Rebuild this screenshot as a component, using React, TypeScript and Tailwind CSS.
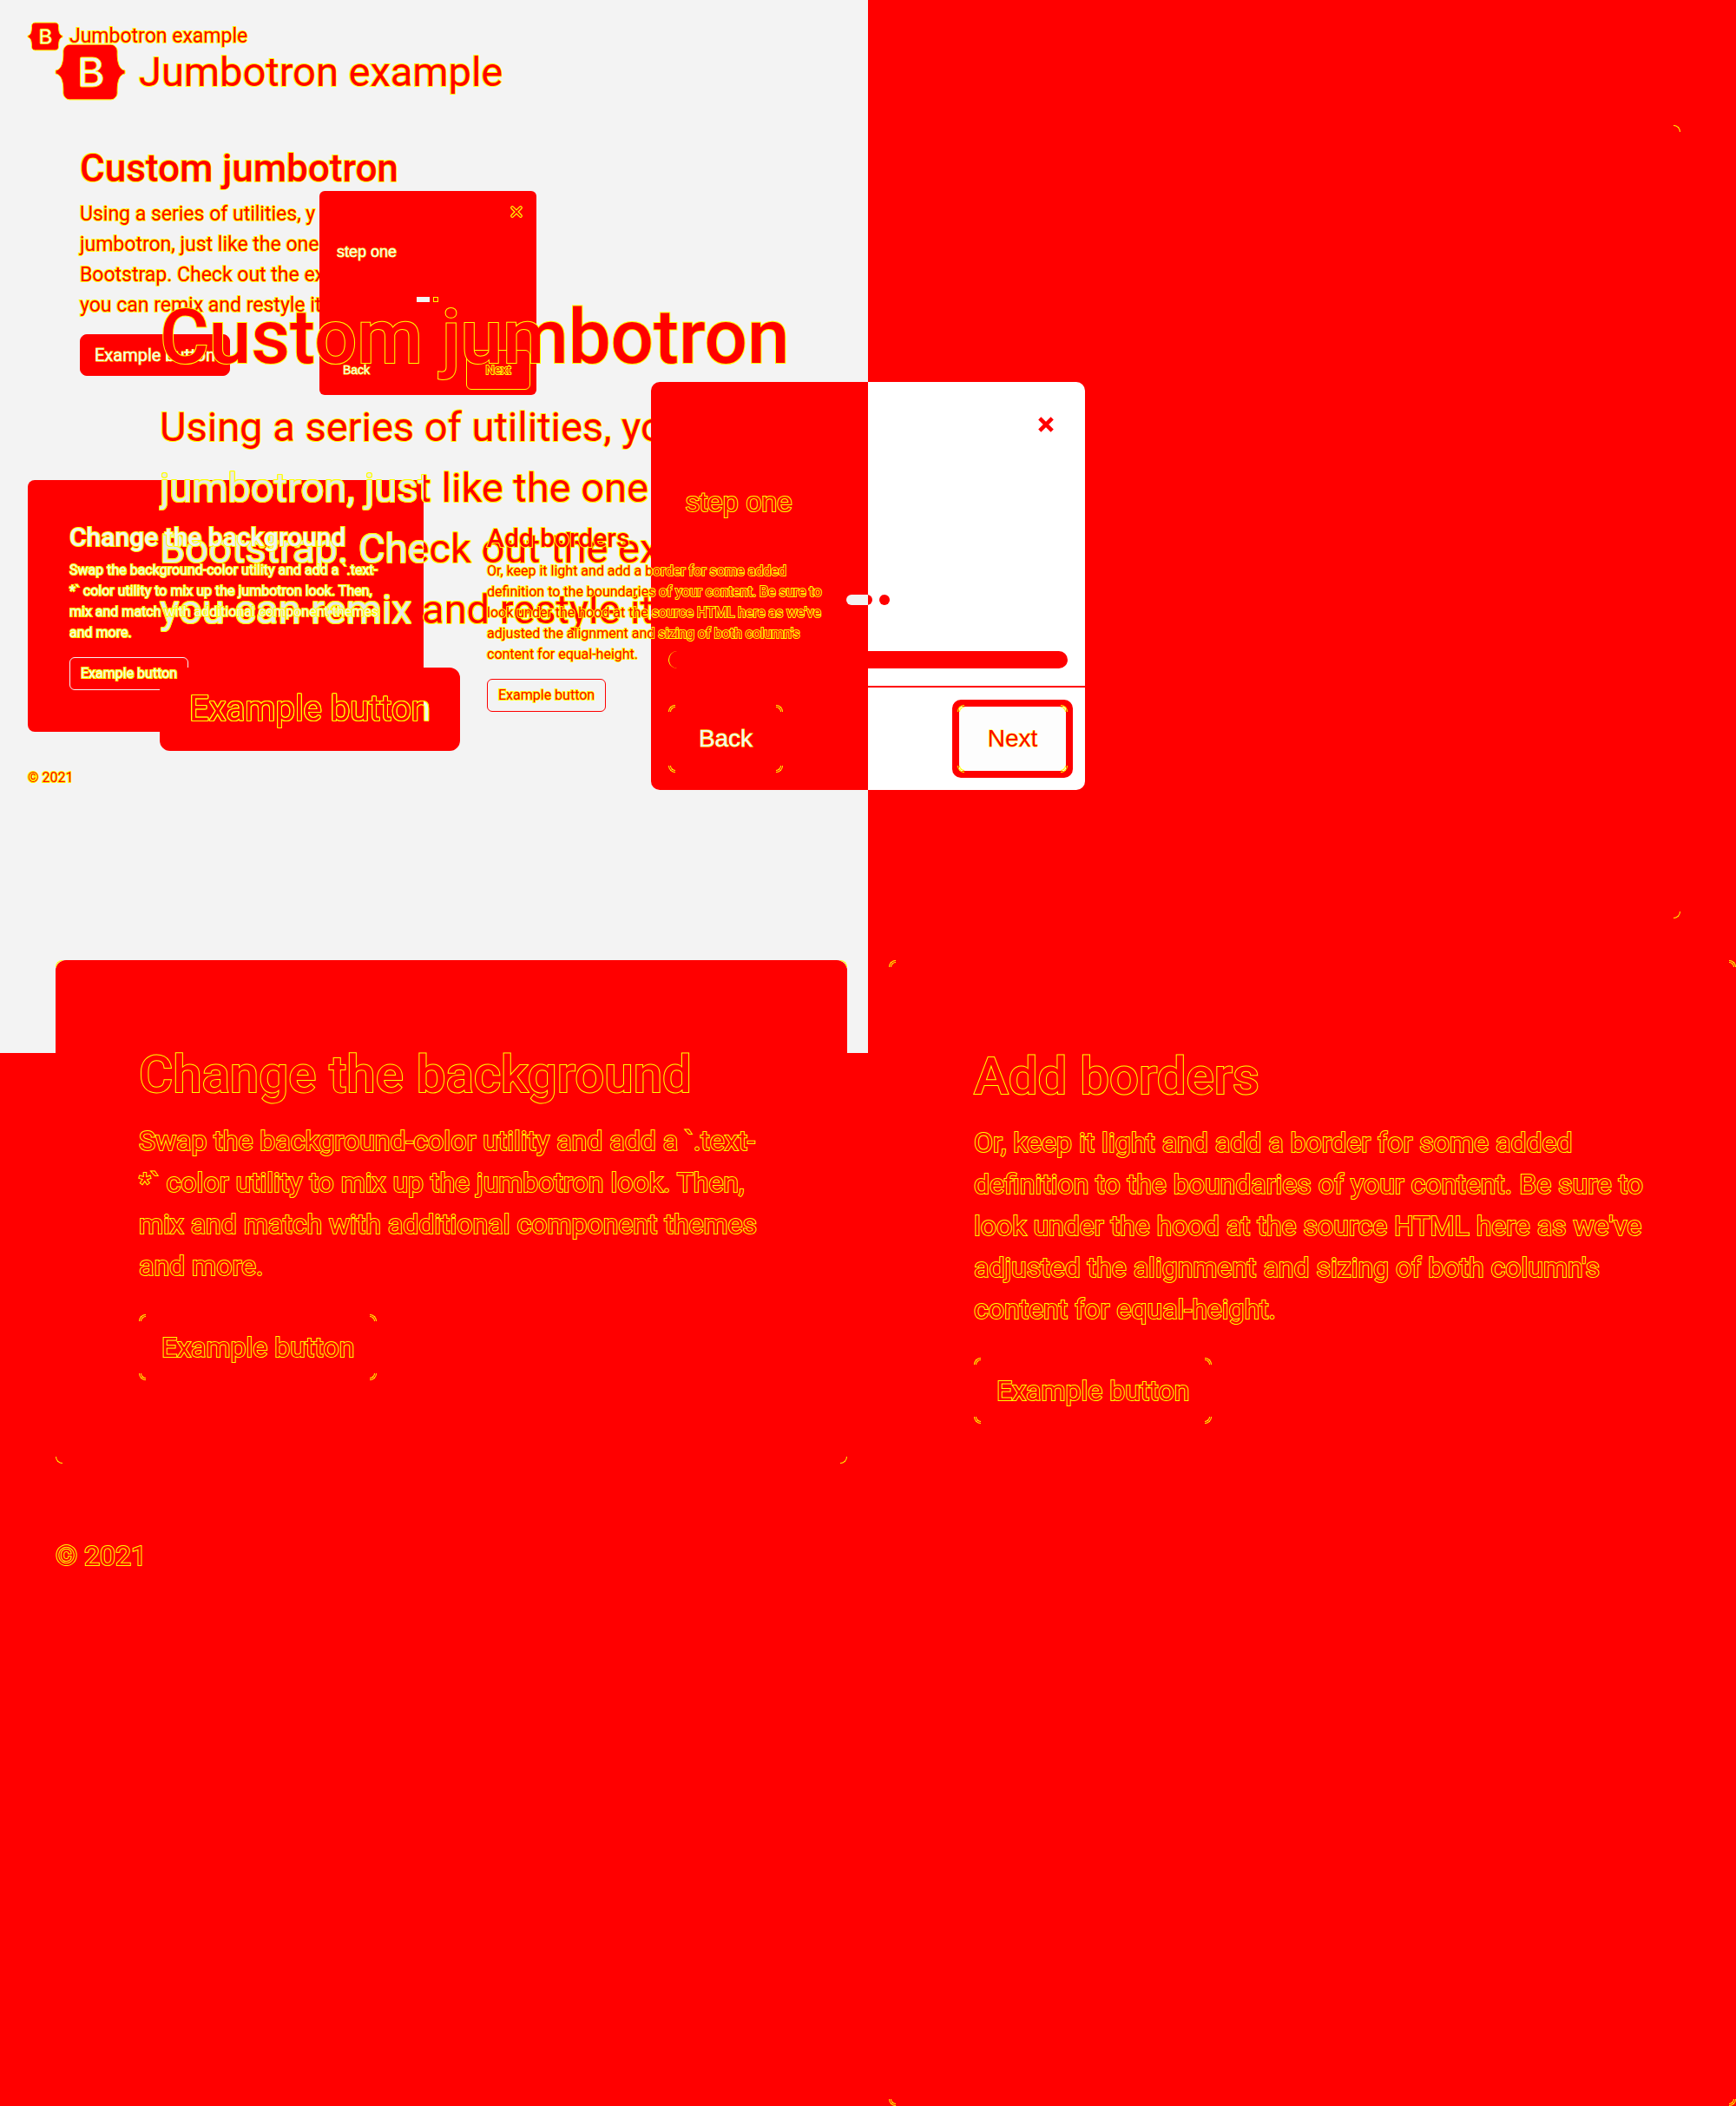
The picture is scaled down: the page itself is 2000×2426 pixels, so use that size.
import React from "react";

type Styles = {
  page: string;
  header: string;
  logo: string;
  brand: string;
  hero: string;
  title: string;
  lede: string;
  heroButton: string;
  row: string;
  filled: string;
  outlined: string;
  heading: string;
  body: string;
  button: string;
  filledInk: string;
  outlinedInk: string;
  filledBorder: string;
  outlinedBorder: string;
  footer: string;
};

const thin = "text-[#ff0000] [-webkit-text-stroke:1px_#ffff00] [paint-order:stroke_fill]";
const wide = "text-[#ff0000] [-webkit-text-stroke:2px_#ffff00] [paint-order:stroke_fill]";
const pale = "text-[#f3f3f3] [-webkit-text-stroke:2px_#ffff00] [paint-order:stroke_fill]";
const paleThin = "text-[#f3f3f3] [-webkit-text-stroke:1px_#ffff00] [paint-order:stroke_fill]";
const clipped =
  "w-max bg-clip-text text-transparent [-webkit-text-stroke:0] [filter:drop-shadow(1px_0_0_#ffff00)_drop-shadow(-1px_0_0_#ffff00)_drop-shadow(0_1px_0_#ffff00)_drop-shadow(0_-1px_0_#ffff00)]";

const small: Styles = {
  page: "w-1/2 h-1/2 min-h-[1213px] px-8 bg-[#f3f3f3]",
  header: "h-18 pt-6 gap-2",
  logo: "w-10 h-8 mt-[2px]",
  brand: "text-[23px] leading-[35px] " + wide,
  hero: "py-24 px-15 mb-6 h-[457px]",
  title: "text-[44px] leading-[53px] mb-2 " + wide,
  lede: "text-[23px] leading-[35px] mb-4 " + wide,
  heroButton: "text-xl leading-[30px] px-4 py-2 rounded-lg bg-[#ff0000] border border-[#ff0000] " + paleThin,
  row: "gap-6",
  filled: "p-12 rounded-lg bg-[#ff0000]",
  outlined: "p-12 -mr-8 border border-transparent",
  heading: "text-[30px] leading-9 mb-2 relative z-20",
  body: "text-base leading-6 mb-4 relative z-20",
  button: "text-base leading-6 px-3 py-1.5 rounded-md border",
  filledInk: pale,
  outlinedInk: wide,
  filledBorder: "border-[#f3f3f3]",
  outlinedBorder: "border-[#ff0000]",
  footer: "mt-[41px] text-base leading-6 " + wide,
};

const large: Styles = {
  page: "relative w-full min-h-screen px-16",
  header: "h-36 pt-12 gap-4",
  logo: "w-20 h-16 mt-[3px]",
  brand: "text-[47px] leading-[70px] " + wide,
  hero: "py-48 px-30 mb-12 h-[914px]",
  title: "text-[87px] leading-[105px] mb-4 " + wide,
  lede: "text-[47px] leading-[70px] mb-8 " + wide,
  heroButton: "text-[40px] leading-[60px] px-8 py-4 rounded-xl bg-[#ff0000] border-2 border-[#ff0000] text-[#ff0000]",
  row: "gap-12",
  filled: "relative p-24 rounded-xl bg-[#ff0000]",
  outlined: "relative p-24 -mr-16 border-2 border-transparent",
  heading: "text-[60px] leading-[72px] mb-4",
  body: "text-[32px] leading-[48px] mb-8",
  button: "relative text-[32px] leading-[48px] px-6 py-3 border-2 border-transparent",
  filledInk: wide,
  outlinedInk: wide,
  filledBorder: "",
  outlinedBorder: "",
  footer: "mt-[82px] text-[32px] leading-[48px] " + wide,
};

function Corners({ twin = false, rightOnly = false }: { twin?: boolean; rightOnly?: boolean }) {
  const arc = "absolute size-2 border-[#ffff00] ";
  const inner = "absolute size-[6px] border-[#ffff00] ";
  return (
    <span
      aria-hidden="true"
      className={twin ? "pointer-events-none absolute -inset-[2px]" : "pointer-events-none absolute inset-0"}
    >
      {!rightOnly && (
        <>
          <span className={arc + "top-0 left-0 border-t border-l rounded-tl-lg"} />
          <span className={arc + "bottom-0 left-0 border-b border-l rounded-bl-lg"} />
        </>
      )}
      <span className={arc + "top-0 right-0 border-t border-r rounded-tr-lg"} />
      <span className={arc + "bottom-0 right-0 border-b border-r rounded-br-lg"} />
      {twin && (
        <>
          <span className={inner + "top-[2px] left-[2px] border-t border-l rounded-tl-md"} />
          <span className={inner + "top-[2px] right-[2px] border-t border-r rounded-tr-md"} />
          <span className={inner + "bottom-[2px] left-[2px] border-b border-l rounded-bl-md"} />
          <span className={inner + "bottom-[2px] right-[2px] border-b border-r rounded-br-md"} />
        </>
      )}
    </span>
  );
}

function Logo({ className }: { className: string }) {
  return (
    <svg viewBox="0 0 118 94" className={className + " shrink-0 overflow-visible"} role="img" aria-label="Bootstrap">
      <path
        fill="#ff0000"
        stroke="#ffff00"
        strokeWidth="1"
        vectorEffect="non-scaling-stroke"
        fillRule="evenodd"
        clipRule="evenodd"
        d="M24.509 0c-6.733 0-11.715 5.893-11.492 12.284.214 6.14-.064 14.092-2.066 20.577C8.943 39.365 5.547 43.485 0 44.014v5.972c5.547.529 8.943 4.649 10.951 11.153 2.002 6.485 2.28 14.437 2.066 20.577C12.794 88.106 17.776 94 24.51 94H93.5c6.733 0 11.714-5.893 11.491-12.284-.214-6.14.064-14.092 2.066-20.577 2.009-6.504 5.396-10.624 10.943-11.153v-5.972c-5.547-.529-8.934-4.649-10.943-11.153-2.002-6.484-2.28-14.437-2.066-20.577C105.214 5.894 100.233 0 93.5 0H24.508zM80 57.863C80 66.663 73.436 72 62.543 72H44a2 2 0 01-2-2V24a2 2 0 012-2h18.437c9.083 0 15.044 4.92 15.044 12.474 0 5.302-4.01 10.049-9.119 10.88v.277C75.317 46.394 80 51.21 80 57.863zM60.521 28.34H49.948v14.934h8.905c6.884 0 10.68-2.772 10.68-7.727 0-4.643-3.264-7.207-9.012-7.207zM49.948 49.2v16.458H60.91c7.167 0 10.964-2.876 10.964-8.281 0-5.406-3.903-8.178-11.425-8.178H49.948z"
      />
    </svg>
  );
}

function Page({ s, big = false, children }: { s: Styles; big?: boolean; children?: React.ReactNode }) {
  const line = "block w-max";
  const overCard = big ? "block bg-[linear-gradient(to_right,#e8e8e8_304px,#ff0000_304px)] " + clipped : line;
  return (
    <div className={"[grid-area:1/1] flex flex-col " + s.page}>
      <header className={"flex items-start " + s.header}>
        <Logo className={s.logo} />
        <span className={s.brand}>Jumbotron example</span>
      </header>
      <section className={"relative " + s.hero}>
        {big && <Corners rightOnly />}
        <h1 className={"w-max font-medium " + s.title}>Custom jumbotron</h1>
        <p className={s.lede}>
          <span className={line}>{big ? "Using a series of utilities, yo" : "Using a series of utilities, y"}</span>
          <span className={overCard}>jumbotron, just like the one</span>
          <span className={overCard}>Bootstrap. Check out the ex</span>
          <span className={overCard}>you can remix and restyle it</span>
        </p>
        <button type="button" className={s.heroButton}>
          {big ? (
            <span className={"block bg-[linear-gradient(to_right,#ff0000_270px,#f3f3f3_270px)] " + clipped}>
              Example button
            </span>
          ) : (
            "Example button"
          )}
        </button>
      </section>
      <div className={"grid flex-1 grid-cols-2 " + s.row}>
        <div>
          <section className={s.filled}>
            {big && <Corners />}
            <h2 className={s.heading + " font-medium " + s.filledInk}>Change the background</h2>
            <p className={s.body + " " + s.filledInk}>
              Swap the background-color utility and add a `.text-*` color utility to mix up the jumbotron look. Then, mix
              and match with additional component themes and more.
            </p>
            <button type="button" className={s.button + " " + s.filledBorder + " " + s.filledInk}>
              {big && <Corners twin />}
              <span className="relative z-20">Example button</span>
            </button>
          </section>
          <footer className={s.footer}>© 2021</footer>
        </div>
        <section className={s.outlined}>
          {big && <Corners twin />}
          <h2 className={s.heading + " font-medium " + s.outlinedInk}>Add borders</h2>
          <p className={s.body + " " + s.outlinedInk}>
            Or, keep it light and add a border for some added definition to the boundaries of your content. Be sure to
            look under the hood at the source HTML here as we've adjusted the alignment and sizing of both column's
            content for equal-height.
          </p>
          <button type="button" className={s.button + " " + s.outlinedBorder + " " + s.outlinedInk}>
            {big && <Corners twin />}
            Example button
          </button>
        </section>
      </div>
      {children}
    </div>
  );
}

function Cross({ className, edged }: { className: string; edged: boolean }) {
  return (
    <svg viewBox="0 0 20 20" className={className + " overflow-visible"} aria-hidden="true">
      {edged && <path d="M2 2L18 18M18 2L2 18" stroke="#ffff00" strokeWidth="7" strokeLinecap="round" />}
      <path
        d="M2 2L18 18M18 2L2 18"
        stroke="#ff0000"
        strokeWidth={edged ? "3" : "5"}
        strokeLinecap={edged ? "round" : "butt"}
      />
    </svg>
  );
}

function SmallTour() {
  return (
    <div
      role="dialog"
      aria-label="Tour, compact"
      className="absolute top-[220px] left-[368px] flex h-[235px] w-[250px] flex-col rounded-md bg-[#ff0000] font-['Liberation_Sans',sans-serif]"
    >
      <button type="button" aria-label="Close" className="mt-[18px] mr-[17px] self-end">
        <Cross className="size-3" edged />
      </button>
      <p className={"mt-7 ml-5 text-lg leading-6 " + paleThin}>step one</p>
      <div className="mt-auto flex justify-center gap-1 pr-[2px]">
        <span className="h-[6px] w-[15px] bg-[#f3f3f3]" />
        <span className="size-[6px] border border-[#ffff00]" />
      </div>
      <div className="mt-[55px] flex items-center justify-between px-[7px] pb-[6px]">
        <button type="button" className={"ml-5 text-sm leading-5 " + paleThin}>
          Back
        </button>
        <button type="button" className={"h-[46px] w-[74px] rounded-md border border-[#ffff00] text-sm leading-5 " + wide}>
          Next
        </button>
      </div>
    </div>
  );
}

function LargeTour() {
  return (
    <div
      role="dialog"
      aria-label="Tour"
      className="absolute top-[440px] left-1/2 z-10 flex h-[470px] w-[500px] -translate-x-1/2 flex-col rounded-[10px] bg-[linear-gradient(to_right,#ff0000_50%,#ffffff_50%)] font-['Liberation_Sans',sans-serif]"
    >
      <button type="button" aria-label="Close" className="mt-10 mr-9 self-end">
        <Cross className="size-[18px]" edged={false} />
      </button>
      <p className={"mt-15 ml-10 text-[32px] leading-10 " + wide}>step one</p>
      <div className="mt-[87px] flex justify-center gap-2">
        <span className="h-3 w-[30px] rounded-full bg-[linear-gradient(to_right,#f3f3f3_25px,#ff0000_25px)]" />
        <span className="size-3 rounded-full bg-[#ff0000]" />
      </div>
      <div className="mx-5 mt-[53px] h-5 rounded-[10px] border-l border-[#ffff00] bg-[#ff0000]" />
      <div className="mt-5 flex flex-1 items-center justify-between border-t-2 border-[#ff0000] px-5">
        <button type="button" className={"relative h-[78px] w-[132px] text-[28px] leading-8 " + paleThin}>
          <span className="pointer-events-none absolute inset-[2px]">
            <Corners twin />
          </span>
          Back
        </button>
        <button
          type="button"
          className={"relative -mr-[6px] h-[90px] w-[139px] rounded-[10px] border-8 border-[#ff0000] bg-[#fdfdfd] text-[28px] leading-8 " + thin}
        >
          <Corners twin />
          Next
        </button>
      </div>
    </div>
  );
}

export default function App() {
  return (
    <main className="relative grid min-h-screen overflow-hidden bg-[#ff0000] font-[Roboto,sans-serif]">
      <Page s={small}>
        <SmallTour />
      </Page>
      <Page s={large} big>
        <LargeTour />
      </Page>
    </main>
  );
}
